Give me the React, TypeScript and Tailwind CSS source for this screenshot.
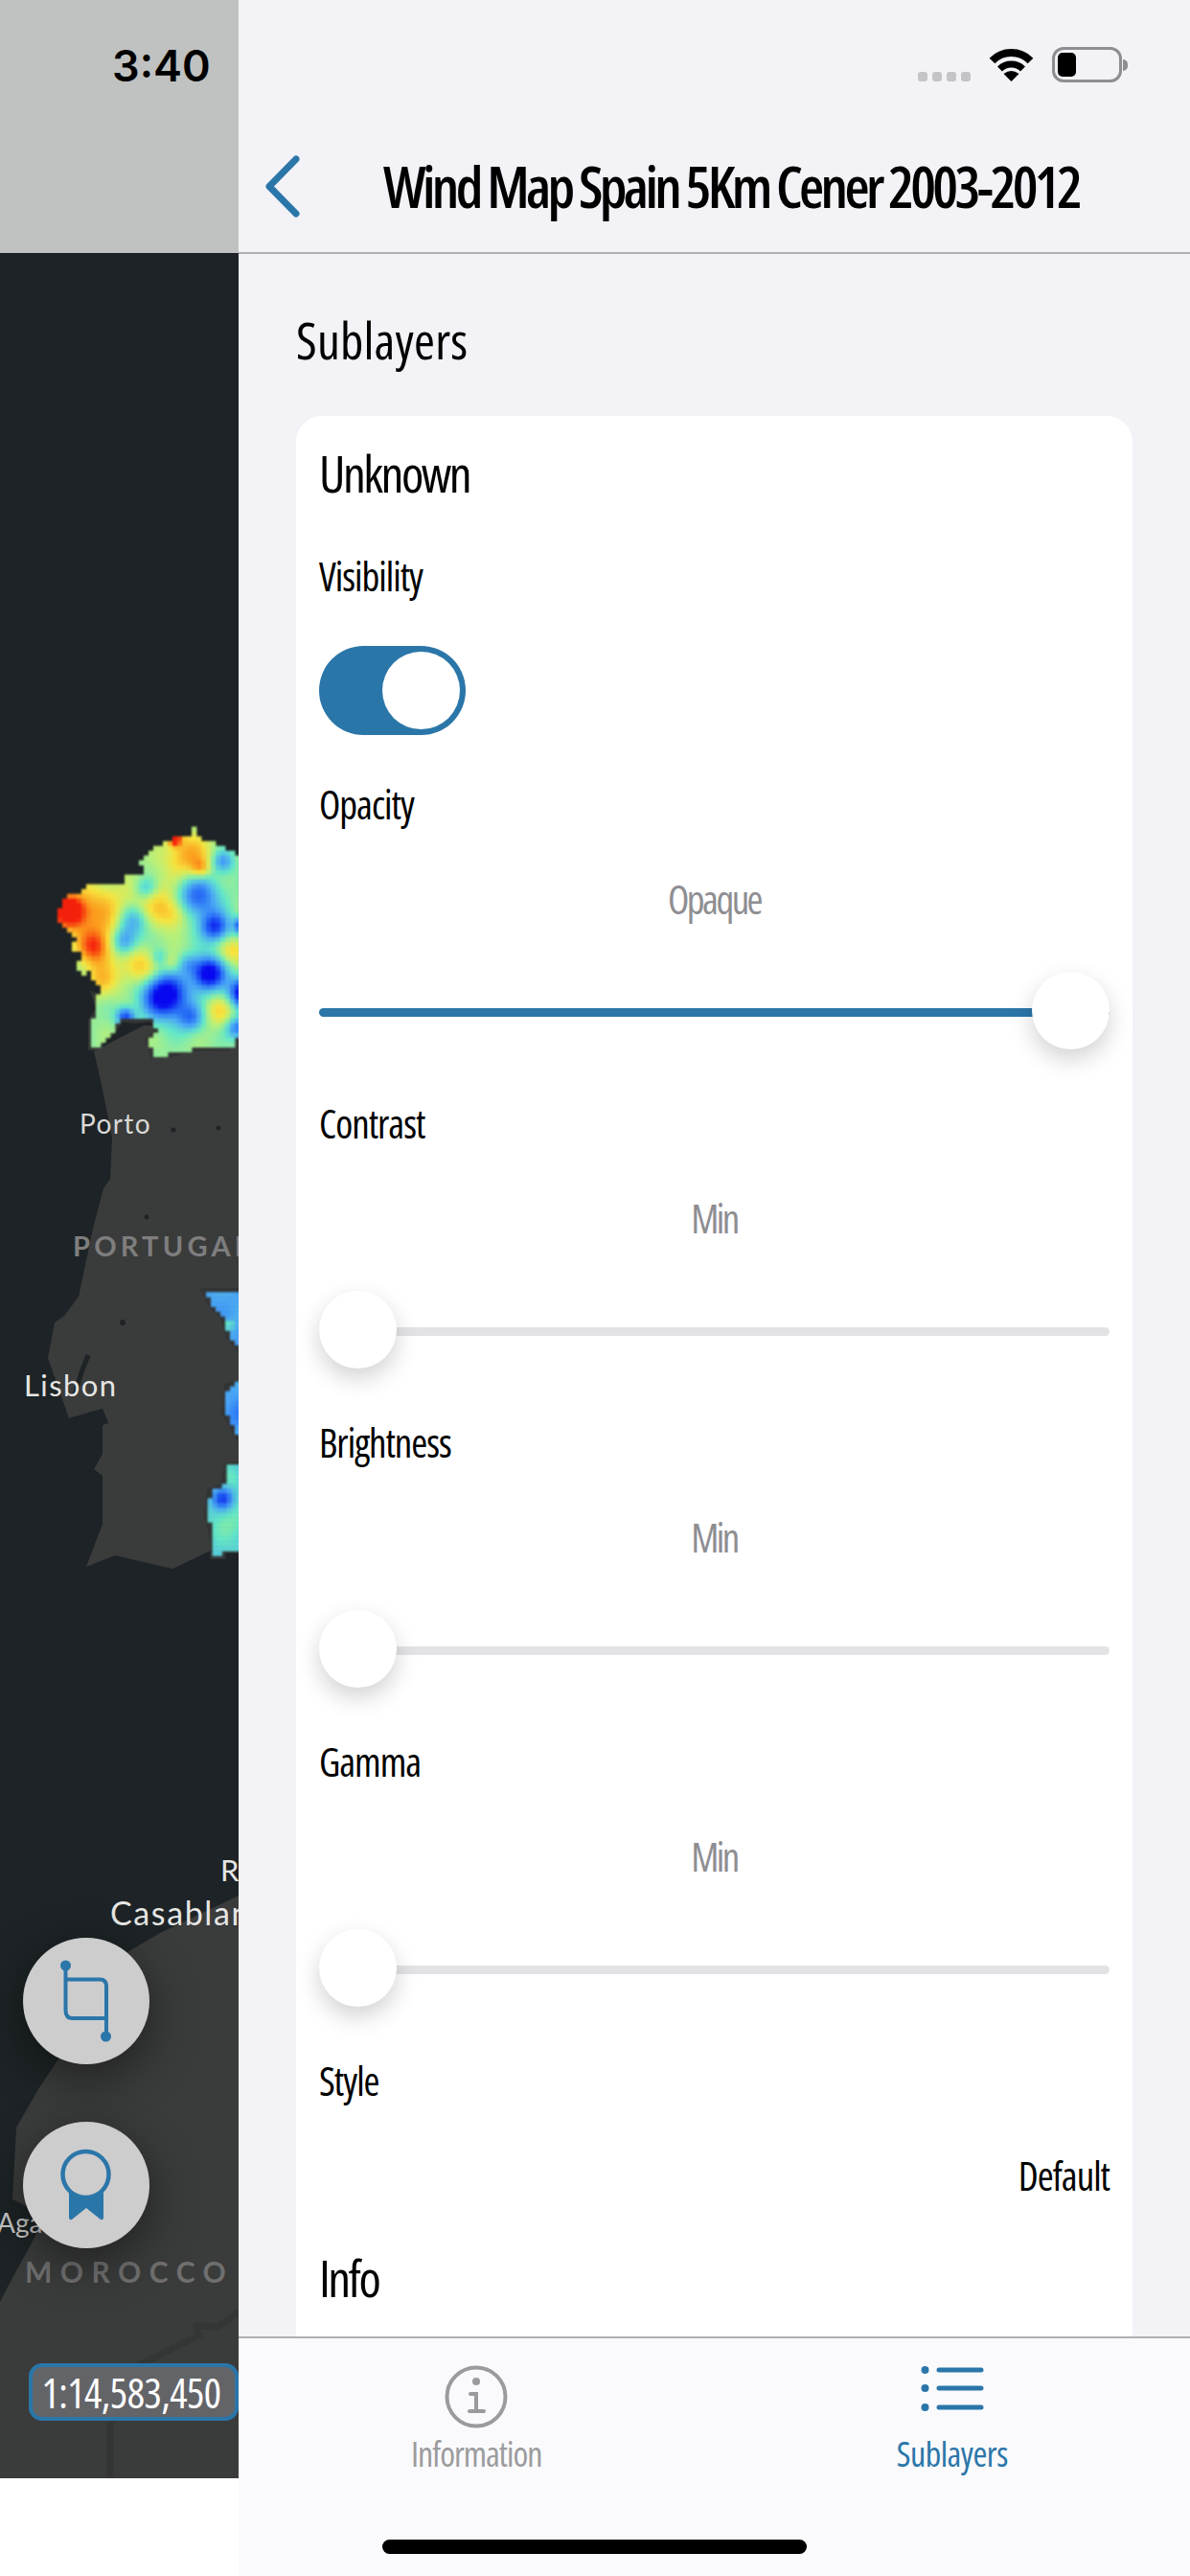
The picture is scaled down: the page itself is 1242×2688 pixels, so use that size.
import { ReactNode } from "react";

const BLUE = "#2b76a9";

type Blob = [number, number, number, number];
type Pt = [number, number];

const galicia: Pt[] = [
  [180, 410], [205, 345], [260, 345], [265, 315], [295, 310], [300, 288], [308, 310], [385, 310], [395, 280], [460, 275],
  [435, 245], [480, 190], [530, 175], [540, 155], [600, 150], [607, 128], [615, 150], [640, 170], [700, 190], [747, 220],
  [760, 775], [720, 820], [620, 820], [510, 845], [480, 845], [465, 795], [490, 770], [480, 730], [420, 735], [380, 730],
  [350, 770], [300, 820], [285, 820], [285, 735], [310, 700], [295, 655], [330, 640], [285, 600], [300, 565], [260, 595],
  [240, 565], [255, 530], [215, 500], [235, 480], [190, 430],
];

const galiciaBlobs: Blob[] = [
  [205, 385, 0.58, 38], [290, 500, 0.38, 40], [580, 210, 0.3, 50], [540, 160, 0.5, 14], [300, 390, 0.26, 70],
  [430, 560, 0.24, 40], [310, 600, 0.22, 38], [620, 250, 0.22, 20], [680, 700, 0.18, 34], [725, 510, 0.2, 30],
  [530, 550, 0.12, 22], [490, 360, 0.2, 50], [540, 395, 0.16, 32],
  [510, 650, -0.66, 48], [645, 580, -0.62, 36], [610, 340, -0.38, 48], [665, 435, -0.44, 32], [755, 640, -0.6, 32],
  [410, 415, -0.26, 34], [380, 480, -0.32, 30], [690, 230, -0.26, 24], [450, 315, -0.2, 24], [385, 715, -0.42, 20],
  [590, 720, -0.3, 30], [750, 430, -0.44, 18], [735, 750, -0.34, 24], [490, 530, -0.14, 18], [580, 550, -0.16, 22],
  [665, 830, -0.42, 8], [405, 745, -0.38, 12],
];

const midA: Pt[] = [[645, 325], [760, 325], [760, 505], [720, 465], [700, 400], [665, 365]];
const midB: Pt[] = [[760, 605], [715, 620], [705, 700], [760, 800]];
const midC: Pt[] = [
  [760, 865], [715, 870], [700, 935], [660, 950], [650, 1020], [670, 1100], [670, 1150], [695, 1150], [695, 1130], [760, 1130],
];
const midBlobs: Blob[] = [
  [690, 965, -0.3, 22], [720, 1040, 0.08, 40], [720, 900, 0.06, 20], [710, 420, 0.2, 10], [730, 700, -0.08, 30],
];

function inside(p: Pt, poly: Pt[]) {
  let hit = false;
  for (let i = 0, j = poly.length - 1; i < poly.length; j = i++) {
    const [xi, yi] = poly[i];
    const [xj, yj] = poly[j];
    if (yi > p[1] !== yj > p[1] && p[0] < ((xj - xi) * (p[1] - yi)) / (yj - yi) + xi) hit = !hit;
  }
  return hit;
}

const stops: [number, number[]][] = [
  [0, [8, 8, 240]],
  [0.15, [32, 96, 245]],
  [0.3, [74, 168, 245]],
  [0.45, [99, 232, 200]],
  [0.58, [183, 240, 122]],
  [0.7, [247, 228, 62]],
  [0.85, [251, 154, 28]],
  [1, [245, 32, 12]],
];

function jet(v: number) {
  const t = Math.max(0, Math.min(1, v));
  for (let i = 1; i < stops.length; i++) {
    if (t <= stops[i][0]) {
      const [a, ca] = stops[i - 1];
      const [b, cb] = stops[i];
      const k = (t - a) / (b - a);
      return `rgb(${ca.map((c, n) => Math.round(c + (cb[n] - c) * k)).join(",")})`;
    }
  }
  return "rgb(245,32,12)";
}

// cells are worked out in zoom coords (3x), then brought back to page pixels
function cells(poly: Pt[], blobs: Blob[], base: number, offY: number) {
  const out: { x: number; y: number; fill: string }[] = [];
  const xs = poly.map((p) => p[0]);
  const ys = poly.map((p) => p[1]);
  const step = 15;
  for (let y = Math.min(...ys); y < Math.max(...ys); y += step) {
    for (let x = Math.min(...xs); x < Math.max(...xs); x += step) {
      if (x > 750 || !inside([x + step / 2, y + step / 2], poly)) continue;
      let v = base + 0.035 * Math.sin(x / 23) * Math.cos(y / 31);
      for (const [bx, by, a, s] of blobs) {
        const d = (x - bx) ** 2 + (y - by) ** 2;
        v += a * Math.exp(-d / (2 * s * s));
      }
      out.push({ x: x / 3, y: y / 3 + offY, fill: jet(v) });
    }
  }
  return out;
}

function Heat({ poly, blobs, base, offY }: { poly: Pt[]; blobs: Blob[]; base: number; offY: number }) {
  return (
    <g className="blur-[0.8px]">
      {cells(poly, blobs, base, offY).map((c, i) => (
        <rect key={i} x={c.x} y={c.y} width={5.4} height={5.4} fill={c.fill} />
      ))}
    </g>
  );
}

const toPoints = (poly: Pt[], offY: number) => poly.map(([x, y]) => `${x / 3},${y / 3 + offY}`).join(" ");

function MapLayer() {
  return (
    <svg viewBox="0 264 249 2322" className="absolute inset-0 h-full w-full">
      <rect x="0" y="264" width="249" height="2322" fill="#1d2326" />
      <path
        d="M98 1097L107 1137L117 1187L115 1230L108 1240L97 1282L82 1353L67 1373L57 1380L50 1417L72 1480L107 1470L113 1485L107 1487L107 1517L98 1533L107 1540L107 1590L90 1635L120 1623L180 1637L220 1618L249 1617L249 1070L150 1070Z"
        fill="#3a3b3b"
      />
      <path d="M92 1414L85 1432L78 1455" stroke="#1d2326" strokeWidth="5" fill="none" />
      <path d="M72 1480L107 1470L113 1485L100 1482Z" fill="#1d2326" />
      <circle cx="181" cy="1179" r="2.6" fill="#1d2326" />
      <circle cx="228" cy="1177" r="2.4" fill="#1d2326" />
      <circle cx="153" cy="1270" r="2.4" fill="#1d2326" />
      <circle cx="128" cy="1380" r="3" fill="#1d2326" />
      <path
        d="M249 1978L167 2017L133 2037L60 2150L40 2180L17 2220L13 2295L43 2310L37 2333L13 2377L0 2402L0 2586L249 2586Z"
        fill="#3a3b3b"
      />
      <path d="M249 2413L227 2428L205 2427L207 2437L147 2467L115 2530L115 2586" stroke="#343535" strokeWidth="7" fill="none" />
      <polygon points={toPoints(midA, 1240)} fill="#323333" stroke="#323333" strokeWidth="8" />
      <polygon points={toPoints(midB, 1240)} fill="#323333" stroke="#323333" strokeWidth="8" />
      <polygon points={toPoints(midC, 1240)} fill="#323333" stroke="#323333" strokeWidth="8" />
      <polygon points={toPoints(galicia.slice(21, 36), 820)} fill="#323333" stroke="#323333" strokeWidth="6" />
      <Heat poly={galicia} blobs={galiciaBlobs} base={0.53} offY={820} />
      <Heat poly={midA} blobs={midBlobs} base={0.3} offY={1240} />
      <Heat poly={midB} blobs={midBlobs} base={0.3} offY={1240} />
      <Heat poly={midC} blobs={midBlobs} base={0.4} offY={1240} />
      <g className="font-['Lato',sans-serif]">
        <text x="83" y="1183" fontSize="28" letterSpacing="1.4" fill="#d8d8d6">Porto</text>
        <text x="76" y="1311" fontSize="29" fontWeight="700" letterSpacing="4.2" fill="#7e7e7e">PORTUGAL</text>
        <text x="25" y="1457" fontSize="31" letterSpacing="1.4" fill="#e6e6e4">Lisbon</text>
        <text x="230" y="1963" fontSize="31" fill="#e6e6e4">R</text>
        <text x="115" y="2009" fontSize="34" letterSpacing="1.6" fill="#e6e6e4">Casablanca</text>
        <text x="-3" y="2330" fontSize="28" fill="#c8c8c8">Aga</text>
        <text x="26" y="2382" fontSize="30" fontWeight="700" letterSpacing="8.5" fill="#6f6f6f">MOROCCO</text>
      </g>
    </svg>
  );
}

function CropIcon() {
  return (
    <svg width="132" height="132" viewBox="0 0 132 132" fill="none" stroke={BLUE} strokeWidth="4">
      <path d="M44.500 29V76Q44.500 84 52 84H87" />
      <path d="M44.500 43.500H80Q87 43.500 87 50V103" />
      <circle cx="44.500" cy="29" r="5.500" fill={BLUE} stroke="none" />
      <circle cx="86.500" cy="103" r="5.500" fill={BLUE} stroke="none" />
    </svg>
  );
}

function AwardIcon() {
  return (
    <svg width="132" height="132" viewBox="0 0 132 132" fill="none">
      <path d="M48 72L84 72V100Q84 103 81 102L66 90L51 102Q48 103 48 100Z" fill={BLUE} />
      <circle cx="65.500" cy="55" r="24" fill="#cdcdce" stroke={BLUE} strokeWidth="4.500" />
    </svg>
  );
}

function Fab({ children }: { children: ReactNode }) {
  return (
    <div className="flex h-[132px] w-[132px] items-center justify-center rounded-full bg-[#cdcdce] shadow-[0_14px_50px_rgba(0,0,0,0.45)]">
      {children}
    </div>
  );
}

function LeftPane() {
  return (
    <div className="flex h-full w-[249px] shrink-0 flex-col bg-white">
      <div className="h-[264px] bg-[#c0c2c1] pl-[117px] pt-[52px] font-['Inter',sans-serif] text-[45px] font-semibold leading-[34px] text-black [font-stretch:100%]">
        3:40
      </div>
      <div className="relative h-[2322px] overflow-hidden">
        <MapLayer />
        <div className="absolute left-[24px] top-[1758px] flex flex-col gap-[60px]">
          <Fab>
            <CropIcon />
          </Fab>
          <Fab>
            <AwardIcon />
          </Fab>
        </div>
        <div className="absolute left-[30px] top-[2202px] flex h-[60px] w-[219px] items-center justify-center rounded-[14px] border-4 border-[#2b76a9] bg-[#636468] pr-[5px] text-[43px] leading-none tracking-[-0.5px] text-white">
          1:14,583,450
        </div>
      </div>
    </div>
  );
}

function StatusIcons() {
  return (
    <div className="flex h-[37px] items-end justify-end pr-[65px]">
      <div className="mb-[1px] flex gap-[5px]">
        <div className="h-[10px] w-[10px] rounded-[3px] bg-[#c4c4c8]" />
        <div className="h-[10px] w-[10px] rounded-[3px] bg-[#c4c4c8]" />
        <div className="h-[10px] w-[10px] rounded-[3px] bg-[#c4c4c8]" />
        <div className="h-[10px] w-[10px] rounded-[3px] bg-[#c4c4c8]" />
      </div>
      <svg width="47" height="37" viewBox="0 0 47 37" className="ml-[19px]" fill="none" stroke="#000">
        <path d="M3.500 14.500A28 28 0 0 1 43.500 14.500" strokeWidth="8" />
        <path d="M11.500 23A17 17 0 0 1 35.500 23" strokeWidth="7" />
        <path d="M23.500 36L15.500 28Q23.500 22 31.500 28Z" fill="#000" stroke="none" />
      </svg>
      <div className="ml-[19px] flex items-center">
        <div className="flex h-[37px] w-[73px] items-center rounded-[12px] border-[3.5px] border-[#8e8e92] pl-[2.500px]">
          <div className="h-[25px] w-[19px] rounded-[5px] bg-black" />
        </div>
        <div className="ml-[1px] h-[12px] w-[5px] rounded-r-full bg-[#8e8e92]" />
      </div>
    </div>
  );
}

function FieldLabel({ children }: { children: ReactNode }) {
  return <div className="h-[50px] text-[41px] leading-[50px] font-medium tracking-[-1px] text-black">{children}</div>;
}

function Heading({ children, className }: { children: ReactNode; className: string }) {
  return <div className={`h-[60px] text-[53px] leading-[60px] font-medium tracking-[-2.5px] text-black ${className}`}>{children}</div>;
}

function Slider({ label, value, on }: { label: string; value: string; on?: boolean }) {
  return (
    <div className="mt-[52px] first:mt-[47px]">
      <FieldLabel>{label}</FieldLabel>
      <div className="mt-[49px] h-[50px] text-center text-[41px] leading-[50px] tracking-[-2.5px] text-[#8e8e92]">{value}</div>
      <div className={`relative mt-[51px] flex h-[81px] ${on ? "justify-end" : "justify-start"}`}>
        <div className={`absolute inset-x-0 top-[38px] h-[9px] rounded-full ${on ? "bg-[#2b76a9]" : "bg-[#e3e3e5]"}`} />
        <div className="relative h-[81px] w-[81px] rounded-full bg-white shadow-[0_10px_24px_rgba(0,0,0,0.18)]" />
      </div>
    </div>
  );
}

function Card() {
  return (
    <div className="ml-[60px] mt-[49px] h-[2100px] w-[873px] rounded-t-[27px] bg-white px-[24px] pt-[30px]">
      <Heading className="">Unknown</Heading>
      <div className="mt-[52px]">
        <FieldLabel>Visibility</FieldLabel>
      </div>
      <div className="mt-[48px] flex h-[93px] w-[153px] items-center justify-end rounded-full bg-[#2b76a9] pr-[6px]">
        <div className="h-[81px] w-[81px] rounded-full bg-white" />
      </div>
      <div>
        <Slider label="Opacity" value="Opaque" on />
        <Slider label="Contrast" value="Min" />
        <Slider label="Brightness" value="Min" />
        <Slider label="Gamma" value="Min" />
      </div>
      <div className="mt-[52px]">
        <FieldLabel>Style</FieldLabel>
      </div>
      <div className="mt-[49px] h-[50px] text-right text-[41px] leading-[50px] font-medium tracking-[-1px] text-black">Default</div>
      <Heading className="mt-[52px]">Info</Heading>
    </div>
  );
}

function TabBar() {
  return (
    <div className="h-[250px] shrink-0 border-t-2 border-[#b0b0b2] bg-[#fafafc]">
      <div className="grid grid-cols-2 pt-[28px]">
        <div className="flex flex-col items-center">
          <svg width="66" height="66" viewBox="0 0 66 66" fill="none" stroke="#9b9b9d" strokeWidth="4">
            <circle cx="33" cy="33" r="30.500" />
            <circle cx="33" cy="17" r="4" fill="#9b9b9d" stroke="none" />
            <path d="M27 30H33V48M26 48H41" strokeLinecap="round" />
          </svg>
          <div className="mt-[5px] text-[36px] leading-[44px] tracking-[-1px] text-[#9b9b9d]">Information</div>
        </div>
        <div className="flex flex-col items-center">
          <svg width="66" height="66" viewBox="0 0 66 66" fill="none" stroke={BLUE} strokeWidth="5" strokeLinecap="round">
            <circle cx="4.500" cy="5" r="4" fill={BLUE} stroke="none" />
            <circle cx="4.500" cy="24" r="4" fill={BLUE} stroke="none" />
            <circle cx="4.500" cy="44" r="4" fill={BLUE} stroke="none" />
            <path d="M19 5H63M19 24H63M19 44H63" />
          </svg>
          <div className="mt-[5px] text-[36px] leading-[44px] tracking-[-0.5px] text-[#2b76a9]">Sublayers</div>
        </div>
      </div>
      <div className="ml-[150px] mt-[67px] h-[15px] w-[443px] rounded-full bg-black" />
    </div>
  );
}

export default function App() {
  return (
    <div className="flex h-[2688px] w-[1242px] overflow-hidden bg-white font-['Open_Sans',sans-serif] font-stretch-[75%]">
      <LeftPane />
      <div className="flex h-full min-w-0 flex-1 flex-col bg-[#f2f2f7]">
        <div className="h-[265px] shrink-0 border-b-2 border-[#b0b0b2] pt-[49px]">
          <StatusIcons />
          <div className="mt-[76px] flex items-center pl-[27px]">
            <svg width="37" height="65" viewBox="0 0 37 65" fill="none" stroke={BLUE} strokeWidth="7" strokeLinecap="round" strokeLinejoin="round">
              <path d="M33 4L5 32.500L33 61" />
            </svg>
            <div className="ml-[87px] text-[60px] leading-[65px] font-[560] tracking-[-3.65px] text-black">Wind Map Spain 5Km Cener 2003-2012</div>
          </div>
        </div>
        <div className="min-h-0 flex-1 overflow-hidden">
          <div className="ml-[60px] mt-[60px] h-[60px] text-[53px] leading-[60px] font-medium tracking-[0.2px] text-black">Sublayers</div>
          <Card />
        </div>
        <TabBar />
      </div>
    </div>
  );
}
